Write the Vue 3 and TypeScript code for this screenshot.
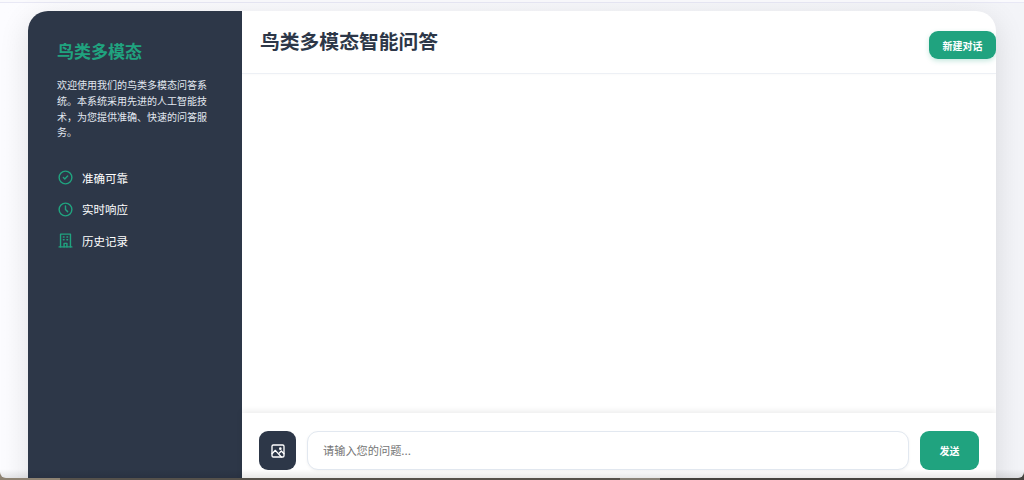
<template>
  <div class="page">
    <div class="shell">
      <aside class="sidebar">
        <h2 class="brand">鸟类多模态</h2>
        <p class="intro">欢迎使用我们的鸟类多模态问答系统。本系统采用先进的人工智能技术，为您提供准确、快速的问答服务。</p>
        <ul class="features">
          <li v-for="item in features" :key="item.label">
            <svg viewBox="0 0 24 24" fill="none" stroke="currentColor" stroke-width="2" stroke-linecap="round" stroke-linejoin="round">
              <path v-for="d in item.paths" :key="d" :d="d" />
            </svg>
            <span>{{ item.label }}</span>
          </li>
        </ul>
      </aside>
      <main class="chat">
        <header class="chat-head">
          <h1>鸟类多模态智能问答</h1>
          <button type="button" class="new-chat">新建对话</button>
        </header>
        <div class="messages"></div>
        <footer class="composer">
          <button type="button" class="upload" title="上传图片">
            <svg viewBox="0 0 24 24" fill="none" stroke="currentColor" stroke-width="2" stroke-linecap="round" stroke-linejoin="round">
              <rect x="3" y="3" width="18" height="18" rx="2" />
              <circle cx="15.5" cy="8.5" r="1" />
              <path d="M3 16l5-5 9 10" />
              <path d="M14 15l3-3 4 4" />
            </svg>
          </button>
          <input v-model="question" type="text" class="ask" placeholder="请输入您的问题..." />
          <button type="button" class="send">发送</button>
        </footer>
      </main>
    </div>
  </div>
</template>

<script setup lang="ts">
import { ref } from 'vue'

interface Feature {
  label: string
  paths: string[]
}

const question = ref('')

const features: Feature[] = [
  {
    label: '准确可靠',
    paths: ['M12 3a9 9 0 1 0 0 18a9 9 0 0 0 0-18z', 'M9 12l2 2l4-4'],
  },
  {
    label: '实时响应',
    paths: ['M12 3a9 9 0 1 0 0 18a9 9 0 0 0 0-18z', 'M12 7v5l3 3'],
  },
  {
    label: '历史记录',
    paths: [
      'M3 21h18',
      'M5 21V3h14v18',
      'M9 7h1',
      'M14 7h1',
      'M9 11h1',
      'M14 11h1',
      'M10 21v-5h4v5',
    ],
  },
]
</script>

<style>
html, body {
  margin: 0;
  height: 100%;
  overflow: hidden;
  background: linear-gradient(90deg, #8d8272 0 60px, #55514b 60px 620px, #8a8378 620px 660px, #45433f 660px);
}
</style>

<style scoped>
.page {
  position: relative;
  height: 478px;
  box-sizing: border-box;
  padding: 11px 28px 0;
  overflow: hidden;
  border-radius: 0 0 6px 6px;
  background:
    linear-gradient(#fafafd 0 2px, #e8e8f5 2px 3px, transparent 3px),
    linear-gradient(90deg, #fcfcff, #f3f4f8);
  font-family: "Inter", "Noto Sans CJK SC", sans-serif;
}
/* 視窗底部的淡灰漸層 */
.page::after {
  content: "";
  position: absolute;
  left: 0;
  right: 0;
  bottom: 0;
  height: 9px;
  background: linear-gradient(rgba(0, 0, 0, 0), rgba(0, 0, 0, 0.09));
  pointer-events: none;
}
.shell {
  display: flex;
  height: 500px;
  border-radius: 20px;
  overflow: hidden;
  background: #fff;
  box-shadow: 0 8px 30px rgba(0, 0, 0, 0.12);
}
.sidebar {
  flex: 0 0 214px;
  box-sizing: border-box;
  padding: 29px;
  background: #2d3748;
  color: #fff;
}
.brand {
  margin: 0 0 14px;
  font-size: 17px;
  line-height: 24px;
  font-weight: 700;
  color: #20a37f;
}
.intro {
  margin: 0 0 27.8px;
  font-size: 10px;
  line-height: 15.8px;
  color: #e2e8f0;
}
.features {
  list-style: none;
  margin: 0;
  padding: 0;
  display: flex;
  flex-direction: column;
  gap: 13.5px;
}
.features li {
  display: flex;
  align-items: center;
  gap: 8px;
  height: 18px;
  font-size: 11.5px;
}
.features svg {
  width: 17px;
  height: 17px;
  color: #20a37f;
  flex: none;
}
.chat {
  flex: 1;
  min-width: 0;
  display: flex;
  flex-direction: column;
  height: 477px;
}
.chat-head {
  flex: none;
  height: 62px;
  display: flex;
  align-items: center;
  justify-content: space-between;
  padding-left: 18px;
  border-bottom: 1px solid #edf0f5;
  box-shadow: 0 1px 3px rgba(0, 0, 0, 0.02);
}
.chat-head h1 {
  margin: 0 0 4px;
  font-size: 19.8px;
  font-weight: 700;
  color: #2d3748;
}
.new-chat {
  width: 67px;
  height: 28px;
  margin-top: 6px;
  padding: 0;
  border: none;
  border-radius: 9px;
  background: #20a37f;
  color: #fff;
  font: 600 10px "Inter", "Noto Sans CJK SC", sans-serif;
  box-shadow: 0 2px 5px rgba(32, 163, 127, 0.25);
}
.messages { flex: 1; }
.composer {
  flex: none;
  height: 75px;
  display: flex;
  align-items: center;
  gap: 11px;
  padding: 0 17px;
  box-shadow: 0 -2px 6px rgba(0, 0, 0, 0.08);
}
.upload {
  flex: none;
  width: 37px;
  height: 39px;
  padding: 0;
  display: flex;
  align-items: center;
  justify-content: center;
  border: none;
  border-radius: 9px;
  background: #2d3748;
  color: #fff;
}
.upload svg { width: 16px; height: 16px; }
.ask {
  flex: 1;
  min-width: 0;
  height: 39px;
  box-sizing: border-box;
  padding: 0 15px;
  border: 1.5px solid #e2e8f0;
  border-radius: 11px;
  outline: none;
  background: #fff;
  font: 11.2px "Inter", "Noto Sans CJK SC", sans-serif;
  color: #2d3748;
  box-shadow: 0 1px 3px rgba(0, 0, 0, 0.05);
}
.ask::placeholder { color: #757575; }
.send {
  flex: none;
  width: 59px;
  height: 39px;
  padding: 0;
  border: none;
  border-radius: 9px;
  background: #20a37f;
  color: #fff;
  font: 600 10px "Inter", "Noto Sans CJK SC", sans-serif;
}
</style>
